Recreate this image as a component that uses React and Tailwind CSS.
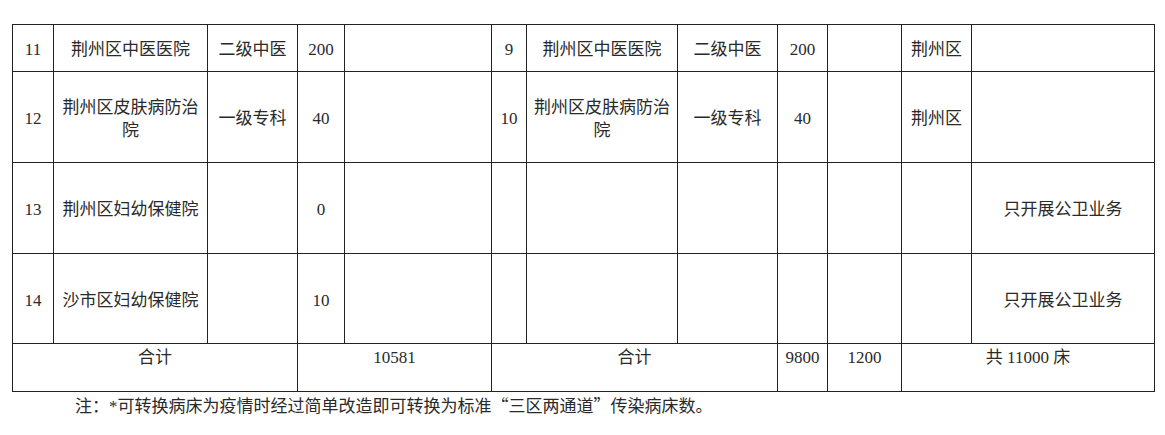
import React from "react";

const F = { fontFamily: '"Liberation Serif", "Noto Sans CJK SC", serif' };
const CJK = { fontFamily: '"Noto Sans CJK SC", sans-serif' };

const widths = [41, 154, 90, 47, 147, 35, 151, 100, 50, 74, 70, 183];

const rows = [
  { h: "h-[47px]", c: ["11", "荆州区中医医院", "二级中医", "200", "", "9", "荆州区中医医院", "二级中医", "200", "", "荆州区", ""] },
  { h: "h-[91px]", c: ["12", "荆州区皮肤病防治院", "一级专科", "40", "", "10", "荆州区皮肤病防治院", "一级专科", "40", "", "荆州区", ""] },
  { h: "h-[91px]", c: ["13", "荆州区妇幼保健院", "", "0", "", "", "", "", "", "", "", "只开展公卫业务"] },
  { h: "h-[90px]", c: ["14", "沙市区妇幼保健院", "", "10", "", "", "", "", "", "", "", "只开展公卫业务"] },
];

const td = "border border-[#222] text-center align-middle px-[6px] pt-[3px] pb-0";

export default function App() {
  return (
    <div className="w-[1165px] h-[435px] bg-white overflow-hidden text-[#2a2a2a] text-[17px] leading-[23px]" style={F}>
      <div className="pt-[24px] pl-[12px]">
        <table className="table-fixed border-collapse w-[1142px]">
          <colgroup>
            {widths.map((w, i) => (
              <col key={i} style={{ width: w }} />
            ))}
          </colgroup>
          <tbody>
            {rows.map((r, i) => (
              <tr key={i} className={r.h}>
                {r.c.map((t, j) => (
                  <td key={j} className={td}>{t}</td>
                ))}
              </tr>
            ))}
            <tr className="h-[48px]">
              <td colSpan={3} className="border border-[#222] text-center align-top pt-[2px]">合计</td>
              <td colSpan={2} className="border border-[#222] text-center align-top pt-[2px]">10581</td>
              <td colSpan={3} className="border border-[#222] text-center align-top pt-[2px]">合计</td>
              <td className="border border-[#222] text-center align-top pt-[2px]">9800</td>
              <td className="border border-[#222] text-center align-top pt-[2px]">1200</td>
              <td colSpan={2} className="border border-[#222] text-center align-top pt-[2px]">共 11000 床</td>
            </tr>
          </tbody>
        </table>
      </div>
      <div className="pl-[75px] pt-[1px]">
        注：*可转换病床为疫情时经过简单改造即可转换为标准<span className="inline-block w-[17px] text-right" style={CJK}>“</span>三区两通道<span className="inline-block w-[17px] text-left" style={CJK}>”</span>传染病床数。
      </div>
    </div>
  );
}
